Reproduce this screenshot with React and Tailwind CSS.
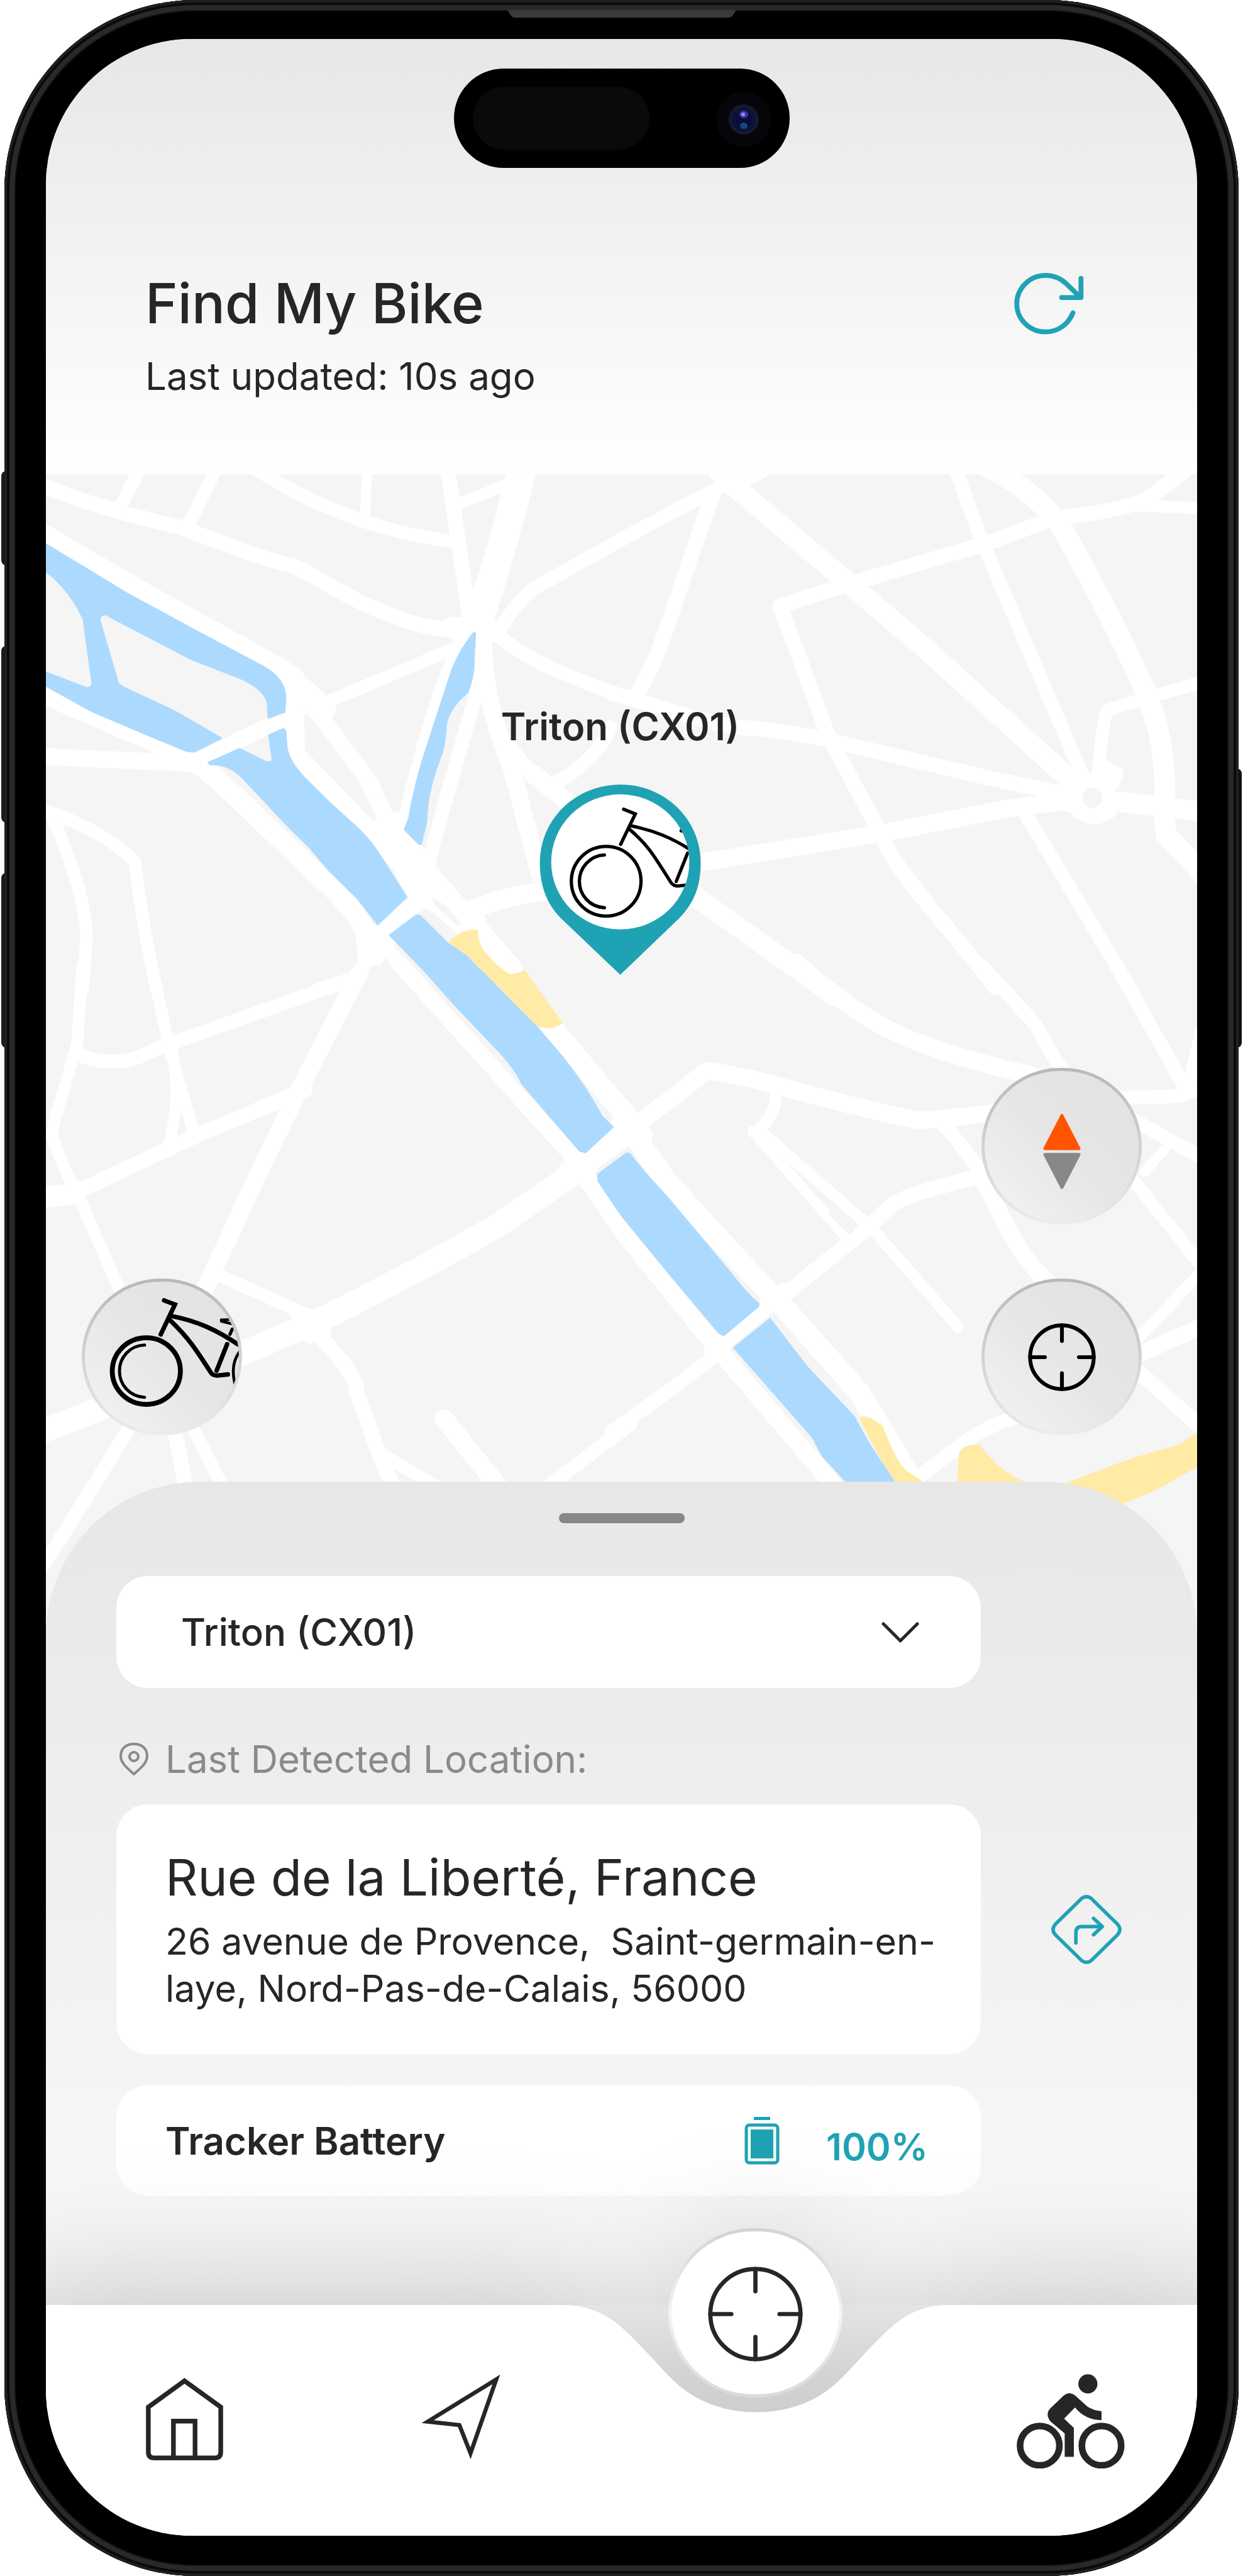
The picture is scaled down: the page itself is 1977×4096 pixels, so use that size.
import React from "react";

// The map is cut in four tiles. Each tile has its own 1568 x 1568 grid.
const tiles = [
  {
    id: "north-west",
    x: 0, y: 780, w: 1060, h: 900,
    roads: [
      [24, "M90 75C200 130 320 170 450 205C560 250 650 300 740 320C850 390 900 430 990 470C1060 500 1110 515 1180 510"],
      [21, "M350 40L305 140"],
      [21, "M542 40L475 200"],
      [21, "M640 30C720 90 820 150 920 190C1000 220 1080 240 1150 250"],
      [16, "M926 40L920 190"],
      [24, "M1130 40C1145 150 1160 280 1185 480"],
      [46, "M1317 30C1285 200 1245 350 1200 510"],
      [18, "M1150 140L1300 70"],
      [22, "M1590 228L1345 390C1310 420 1290 460 1260 510"],
      [22, "M1230 505C1290 560 1340 600 1400 630C1460 660 1520 690 1590 715"],
      [34, "M1140 505L1250 515"],
      [30, "M1170 540C1110 700 1060 900 1020 1120"],
      [22, "M1220 520L1215 640C1190 760 1130 980 1080 1210"],
      [28, "M1218 520C1220 700 1250 800 1290 920C1320 1050 1340 1150 1370 1270"],
      [20, "M800 738L1160 560"],
      [34, "M90 215L350 395L710 630L820 745"],
      [30, "M742 650L745 880L950 1130L1100 1320L1170 1395"],
      [27, "M790 740L930 960L990 1110"],
      [26, "M480 910L750 755"],
      [32, "M90 692L400 850L500 910C560 960 700 1130 830 1270C880 1330 920 1380 930 1440"],
      [27, "M90 887L490 908"],
      [20, "M90 1040C200 1080 280 1130 340 1200C350 1300 370 1450 395 1580"],
      [20, "M130 1060C180 1200 218 1330 218 1430L208 1580"],
      [22, "M960 1440L1080 1590"],
      [26, "M930 1440L1060 1315"],
      [30, "M1150 1365C1230 1320 1300 1295 1400 1285"],
      [36, "M1180 1370L1290 1520"],
      [22, "M1290 860C1320 920 1350 940 1385 975C1450 940 1520 870 1540 800"],
      [30, "M1345 940L1440 1030"],
    ],
    blocks: [
      "M940 1080L1010 1050L1090 1200L1170 1310L1230 1370L1160 1400L1020 1300Z",
      "M895 1380L960 1390L1000 1440L960 1508L935 1510L915 1568L780 1568L880 1530L903 1500Z",
    ],
    ground: ["M1094 1308L1130 1335L1166 1388L1150 1388L1094 1326Z"],
    water: [
      "M100 243L320 400L500 515L660 615Q725 655 722 720L720 757L675 776L673 730Q665 690 610 660L480 600L265 468Q250 470 255 490L300 670L315 682L440 750L562 833L490 876L470 874L400 840L230 755L115 680L100 672L100 628L215 680Q232 685 230 665L222 600L208 480Q200 460 185 430Q155 375 115 340L100 330Z",
      "M522 905L604 862L660 895Q685 910 685 895L676 823L715 803L722 810L725 860Q730 900 770 950L830 1020L900 1095Q940 1140 960 1180L1028 1305L953 1390L900 1310L830 1230L780 1160L720 1090L620 965Q580 910 530 914Z",
      "M1195 517L1201 520L1196 630Q1190 680 1180 700Q1130 750 1127 800Q1125 860 1110 900Q1078 1000 1078 1080L1064 1150L1056 1150L1018 1105L1030 1070Q1045 960 1080 840L1130 660Q1150 580 1195 517Z",
      "M980 1418L1050 1357L1060 1358L1130 1440L1180 1480L1232 1545L1085 1545Z",
    ],
    sand: ["M1132 1440Q1160 1400 1205 1402Q1205 1440 1225 1470Q1270 1530 1290 1535L1325 1523L1350 1568L1250 1568L1180 1480Z"],
  },
  {
    id: "north-east",
    x: 1060, y: 780, w: 1060, h: 900,
    roads: [
      [22, "M-25 258L250 85"],
      [26, "M270 85L350 40"],
      [26, "M235 35L275 85"],
      [33, "M275 75L570 370L760 560L1150 975"],
      [24, "M235 100C200 200 160 350 110 520C80 620 60 660 35 710"],
      [24, "M400 440L560 380C700 330 850 280 920 255C1000 225 1050 190 1120 175C1200 165 1280 150 1330 120L1420 40"],
      [24, "M400 440L520 820C580 960 640 1080 680 1180C740 1290 850 1430 945 1575"],
      [22, "M845 40L905 235L1165 950"],
      [33, "M920 25C1000 70 1060 130 1105 195C1180 350 1260 530 1325 700C1365 830 1375 900 1370 1080L1375 1120L1470 1240"],
      [19, "M1300 142L1470 150"],
      [20, "M1470 665L1330 712L1225 750Q1210 820 1203 940"],
      [24, "M-25 700C80 730 150 770 290 800C400 810 500 830 560 850C750 900 900 950 1130 1000"],
      [28, "M150 1212L660 1115L960 1045L1150 1015"],
      [32, "M1200 1015L1400 1042L1470 1052"],
      [22, "M1020 1060L1290 1590"],
      [32, "M170 1290L540 1600"],
    ],
    blocks: [
      "M1110 970L1170 930L1240 960L1250 1060Q1220 1090 1190 1090Q1150 1080 1135 1055L1090 1040Z",
      "M1210 890L1265 925Q1270 950 1250 985L1200 990Z",
      "M1065 1000L1160 985L1160 1040L1100 1020Z",
    ],
    ground: ["M1163 1010A25 31 0 1 1 1213 1010A25 31 0 1 1 1163 1010Z"],
    water: [],
    sand: [],
  },
  {
    id: "south-west",
    x: 0, y: 1660, w: 1060, h: 1000,
    roads: [
      [19, "M207 -20L195 180C170 290 140 370 130 430C150 500 180 560 200 600C240 700 280 790 315 880"],
      [22, "M195 215C270 250 340 235 390 202L900 10"],
      [19, "M383 -20L425 190L490 430"],
      [18, "M430 190C450 280 450 380 420 470"],
      [24, "M90 600C150 590 190 580 230 565L480 440L770 310"],
      [34, "M90 600L190 588"],
      [28, "M905 0L750 320L640 560L510 860"],
      [26, "M1005 -30L1450 495"],
      [38, "M1480 510L1260 670C1150 740 950 850 800 930L600 1020L90 1230"],
      [40, "M1440 530L1600 410"],
      [20, "M540 800L770 910"],
      [24, "M790 950C870 1040 900 1080 900 1120C930 1200 950 1280 992 1370"],
      [20, "M970 1290L1100 1370"],
      [30, "M1120 1190L1260 1375"],
      [22, "M1590 1205L1370 1380"],
      [22, "M340 1190L200 1430L110 1580"],
      [24, "M440 1220L472 1390"],
      [20, "M480 1200L570 1390"],
      [26, "M1475 530L1585 710"],
      [34, "M1390 140L1500 280L1620 430"],
    ],
    blocks: ["M740 885L797 898L850 880L830 975L780 990L730 960Q745 940 733 915Z"],
    ground: [],
    water: ["M1062 -15L1210 -15L1355 140L1420 220Q1480 300 1520 380L1549 410L1478 480L1462 476L1315 295Q1300 255 1240 190L1150 90Z"],
    sand: ["M1225 0L1280 0Q1290 5 1305 0L1330 0L1420 132Q1400 145 1385 146L1355 140Z"],
  },
  {
    id: "south-east",
    x: 1060, y: 1660, w: 1060, h: 1000,
    roads: [
      [28, "M440 -30C560 80 650 145 740 180C850 225 950 250 1030 270L1100 300"],
      [22, "M910 -20L1040 130C1070 180 1090 230 1130 280"],
      [22, "M1250 -20L1420 300"],
      [20, "M1465 150L1430 300"],
      [22, "M1240 332L1400 328Q1440 320 1470 300"],
      [28, "M30 410L215 260C330 270 500 340 750 392C820 390 900 375 960 370"],
      [19, "M388 310C395 360 370 400 335 425"],
      [16, "M330 420L575 715"],
      [18, "M350 420L620 670"],
      [24, "M890 545C800 570 720 590 680 620L620 680L410 860"],
      [18, "M640 690L850 945"],
      [22, "M810 400C860 460 910 530 930 580"],
      [27, "M910 550C970 660 990 740 1080 830"],
      [34, "M0 400L30 430L110 550L290 760L400 880L500 1000L600 1120L680 1260L740 1370"],
      [28, "M-90 545L17 710L240 1000L545 1380"],
      [22, "M250 1010L140 1100L-25 1225"],
      [28, "M230 1010L410 850"],
      [22, "M750 1345L870 1250C920 1210 980 1190 1040 1170"],
      [22, "M1290 390L1470 495"],
      [20, "M1290 550L1470 790"],
      [16, "M1320 530L1370 470"],
      [18, "M1470 790L1290 990"],
      [26, "M1300 1020L1470 940"],
      [24, "M1300 1060L1470 1220"],
    ],
    blocks: [],
    ground: ["M524 635L540 640L588 688L575 698L524 645Z"],
    water: [
      "M-61 535L0 487L12 478L22 480L60 530L120 600L270 790Q330 870 348 880L348 890L258 970L245 962L140 830L0 650L-61 555Z",
      "M281 1000L375 920L470 1050L590 1185Q640 1290 700 1365L570 1365L505 1290L480 1240Z",
    ],
    sand: [
      "M600 1187Q620 1175 660 1210Q690 1300 720 1330Q745 1345 770 1365L695 1365Q650 1300 600 1187Z",
      "M846 1365L852 1280Q865 1256 905 1260Q950 1330 1025 1362L1025 1365Z",
      "M1100 1370L1250 1310Q1330 1280 1400 1262Q1430 1245 1460 1220L1460 1315L1350 1380L1265 1418L1100 1440Z",
    ],
  },
];

function Tile({ tile, children }) {
  return (
    <svg
      x={tile.x}
      y={tile.y}
      width={tile.w}
      height={tile.h}
      viewBox="0 0 1568 1568"
      preserveAspectRatio="none"
      className="overflow-visible"
    >
      {children}
    </svg>
  );
}

function CityMap() {
  return (
    <svg
      viewBox="78 808 1964 1980"
      preserveAspectRatio="xMidYMin slice"
      className="absolute inset-0 h-full w-full"
      aria-hidden="true"
    >
      {tiles.map((t) => (
        <Tile key={t.id} tile={t}>
          {t.roads.map(([width, d]) => (
            <path
              key={d}
              d={d}
              fill="none"
              stroke="#fff"
              strokeWidth={width}
              strokeLinejoin="round"
              strokeLinecap="round"
              vectorEffect="non-scaling-stroke"
            />
          ))}
          {t.blocks.map((d) => <path key={d} d={d} fill="#fff" />)}
          {t.ground.map((d) => <path key={d} d={d} fill="#f5f5f5" />)}
        </Tile>
      ))}
      {tiles.map((t) => (
        <Tile key={t.id} tile={t}>
          {t.water.map((d) => <path key={d} d={d} fill="#acdaff" />)}
          {t.sand.map((d) => <path key={d} d={d} fill="#ffeba6" />)}
        </Tile>
      ))}
    </svg>
  );
}

function RefreshIcon() {
  return (
    <svg viewBox="80 70 380 340" className="h-[106px] w-[118px]" fill="none" stroke="#20a2b5" strokeWidth="25" strokeLinecap="round" strokeLinejoin="round">
      <path d="M391 286C368 345 315 384 250 384C170 384 103 320 103 240C103 160 170 95 250 95C290 95 325 108 355 136L425 203" />
      <path d="M432 110V208H333" />
    </svg>
  );
}

function BikePin() {
  return (
    <svg viewBox="55 50 835 980" className="h-[305px] w-[260px]" aria-hidden="true">
      <clipPath id="pin-face">
        <ellipse cx="471" cy="450" rx="353" ry="345" />
      </clipPath>
      <path fill="#20a2b5" d="M471 1027L165 735C95 665 60 570 60 455C60 230 245 55 471 55C697 55 882 230 882 455C882 570 850 660 770 740Z" />
      <ellipse cx="471" cy="450" rx="353" ry="345" fill="#fff" />
      <g clipPath="url(#pin-face)" fill="none" stroke="#000" strokeWidth="17" strokeLinecap="round">
        <circle cx="399" cy="549" r="178" />
        <path d="M390 414C315 418 262 480 262 549C262 620 315 680 390 684" />
        <path d="M473 360L548 205L488 181" />
        <path d="M522 265C640 288 730 325 830 388" />
        <path d="M520 285C620 370 650 430 730 555Q742 573 765 573L815 568" />
        <path d="M757 550L815 405M782 291L810 293" />
      </g>
    </svg>
  );
}

function BikeIcon() {
  return (
    <svg viewBox="42 76 790 772" className="h-full w-full" fill="none" stroke="#000" strokeWidth="23" strokeLinecap="round">
      <ellipse cx="357" cy="535" rx="175" ry="171" strokeWidth="25" />
      <path strokeWidth="16" d="M348 401C270 405 219 465 219 535C219 605 270 665 348 670" />
      <path d="M431 347L504 193L448 172" />
      <path d="M485 252C620 278 720 325 828 398" />
      <path d="M480 275C570 360 610 420 690 545Q700 558 720 558L776 552" />
      <path d="M718 533L772 397" />
      <path strokeWidth="17" d="M787 346L798 320" />
      <path strokeWidth="14" d="M742 272L790 270M742 279L795 292" />
      <path strokeWidth="15" d="M840 430C800 480 797 540 812 600" />
    </svg>
  );
}

function CompassIcon() {
  return (
    <svg viewBox="0 0 64 128" className="mt-4 h-[120px] w-[60px]">
      <path fill="#ff5500" stroke="#ff5500" strokeWidth="5" strokeLinejoin="round" d="M32 3L61 59H3Z" />
      <path fill="#888" stroke="#888" strokeWidth="5" strokeLinejoin="round" d="M32 125L61 69H3Z" />
    </svg>
  );
}

function TargetIcon({ className, strokeWidth }) {
  return (
    <svg viewBox="0 0 160 160" className={className} fill="none" stroke="currentColor" strokeWidth={strokeWidth} strokeLinecap="round">
      <circle cx="80" cy="80" r="75" />
      <path d="M80 5V42M80 155V118M5 80H40M155 80H120" />
    </svg>
  );
}

function RoundButton({ label, children }) {
  return (
    <button
      type="button"
      aria-label={label}
      className="h-[249px] w-[255px] rounded-full bg-linear-to-b from-[#b8b8b8] to-[#ececec] p-[5px]"
    >
      <span className="flex h-full w-full items-center justify-center overflow-hidden rounded-full bg-linear-to-tr from-[#f4f4f4] via-[#e6e6e6] to-[#e2e2e2]">
        {children}
      </span>
    </button>
  );
}

function Header() {
  return (
    <header className="bg-linear-to-b from-[#e7e7e7] to-white pt-[47px] pb-[120px]">
      <div className="mx-auto flex h-[158px] w-[534px] items-center justify-between rounded-full bg-black pr-7 pl-[30px]">
        <div className="h-[100px] w-[281px] rounded-full bg-[#0a0a0a]" />
        <svg viewBox="0 0 90 90" className="mt-1 h-[90px] w-[90px]">
          <circle cx="45" cy="45" r="44" fill="#070509" />
          <circle cx="45" cy="45" r="24" fill="#141a30" />
          <circle cx="45" cy="45" r="19" fill="#0c1238" />
          <circle cx="45" cy="45" r="13" fill="#0d0a3c" />
          <ellipse cx="45" cy="37" rx="7" ry="6" fill="#3a36a8" />
          <circle cx="44" cy="37" r="3" fill="#8c93e8" />
          <ellipse cx="45" cy="55" rx="6" ry="5" fill="#124a80" />
        </svg>
      </div>
      <div className="mt-[163px] flex items-start justify-between pr-44 pl-[158px]">
        <div>
          <h1 className="text-[88px] leading-[104px] font-medium">Find My Bike</h1>
          <p className="mt-7 text-[60px] leading-[72px]">Last updated: 10s ago</p>
        </div>
        <button type="button" aria-label="Refresh location">
          <RefreshIcon />
        </button>
      </div>
    </header>
  );
}

function MapView() {
  return (
    <section aria-label="Map" className="relative flex h-[1846px] flex-col justify-end bg-[#f5f5f5] pb-[318px]">
      <CityMap />
      <div className="absolute inset-x-0 top-[365px] flex flex-col items-center gap-[55px] pr-1">
        <p className="text-[60px] leading-[72px] font-semibold">Triton (CX01)</p>
        <BikePin />
      </div>
      <div className="relative flex items-end justify-between pr-[88px] pl-[57px]">
        <RoundButton label="Show bike">
          <BikeIcon />
        </RoundButton>
        <div className="flex flex-col gap-[86px]">
          <RoundButton label="Compass">
            <CompassIcon />
          </RoundButton>
          <RoundButton label="Centre on my location">
            <TargetIcon className="h-[108px] w-[108px] text-black" strokeWidth={9} />
          </RoundButton>
        </div>
      </div>
    </section>
  );
}

function DetailSheet() {
  return (
    <section className="relative -mt-[244px] rounded-t-[244px] bg-linear-to-b from-[#e7e7e7] to-[#fafafa] pt-[50px] pr-[120px] pb-[174px] pl-28">
      <div className="flex justify-center pl-2">
        <div className="h-4 w-[200px] rounded-full bg-[#878787]" />
      </div>
      <div className="mt-[84px] grid grid-cols-[minmax(0,1fr)_112px] gap-x-28">
        <div className="relative h-[178px] rounded-[50px] bg-white">
          <select
            aria-label="Bike"
            className="h-full w-full appearance-none rounded-[50px] bg-transparent pl-[103px] text-[60px] font-medium"
          >
            <option>Triton (CX01)</option>
          </select>
          <svg viewBox="0 0 60 34" className="pointer-events-none absolute top-[73px] right-[98px] h-[34px] w-[60px]" fill="none" stroke="#262626" strokeWidth="5" strokeLinecap="round" strokeLinejoin="round">
            <path d="M3 3L30 30L57 3" />
          </svg>
        </div>

        <div className="col-start-1 mt-[77px] flex items-center gap-[26px] pl-1 text-[#8a8a8a]">
          <svg viewBox="0 0 48 54" className="h-[54px] w-12" fill="none" stroke="currentColor" strokeWidth="4" strokeLinejoin="round">
            <path d="M24 51C16 43 3 35 3 22C3 10 12 3 24 3C36 3 45 10 45 22C45 35 32 43 24 51Z" />
            <circle cx="24" cy="23" r="7" />
          </svg>
          <h2 className="text-[60px] leading-[72px]">Last Detected Location:</h2>
        </div>

        <div className="col-start-1 mt-9 rounded-[50px] bg-white pt-[68px] pr-[70px] pb-[67px] pl-[78px]">
          <p className="text-[80px] leading-[96px]">Rue de la Liberté, France</p>
          <p className="mt-4 text-[59px] leading-[75px] whitespace-pre">
            {"26 avenue de Provence,  Saint-germain-en-\nlaye, Nord-Pas-de-Calais, 56000"}
          </p>
        </div>
        <button type="button" aria-label="Get directions" className="mt-9 self-center">
          <svg viewBox="0 0 120 118" className="h-[110px] w-28" fill="none" stroke="#20a2b5" strokeWidth="6" strokeLinecap="round" strokeLinejoin="round">
            <path d="M52 6Q60 0 68 6L113 50Q121 59 113 68L68 112Q60 118 52 112L7 68Q-1 59 7 50Z" />
            <path d="M42 82V64Q42 54 52 54H86M72 40L87 54L72 68" />
          </svg>
        </button>

        <div className="col-start-1 mt-[50px] flex h-[175px] items-center justify-between rounded-[50px] bg-white pr-[84px] pl-[78px]">
          <p className="text-[60px] leading-[72px] font-semibold">Tracker Battery</p>
          <div className="flex items-center gap-[74px]">
            <svg viewBox="0 0 56 76" className="h-[76px] w-14">
              <path fill="#20a2b5" d="M15 0H41V5H15Z" />
              <rect x="3" y="13" width="50" height="60" rx="5" fill="none" stroke="#20a2b5" strokeWidth="5" />
              <rect x="10" y="20" width="36" height="46" fill="#20a2b5" />
            </svg>
            <p className="mt-5 text-[59px] leading-[72px] font-semibold text-[#20a2b5]">100%</p>
          </div>
        </div>
      </div>
    </section>
  );
}

function TabBar() {
  return (
    <nav aria-label="Main" className="relative h-[367px]">
      <svg
        viewBox="0 0 1964 394"
        preserveAspectRatio="none"
        className="absolute inset-0 h-full w-full overflow-visible"
        aria-hidden="true"
      >
        <circle cx="1212" cy="20" r="160" className="fill-black/12 blur-[90px]" />
        <path
          className="fill-white drop-shadow-[0_0_120px_rgba(0,0,0,0.25)]"
          d="M-100 0H882C925 0 958 17 982 38C1020 72 1045 105 1077 135C1117 170 1165 183 1212 183C1259 183 1307 170 1347 135C1379 105 1404 72 1442 38C1466 17 1497 0 1540 0H2064V900H-100Z"
        />
      </svg>
      <ul className="relative grid grid-cols-[438fr_393fr_555fr_287fr] items-start pt-[110px] pl-[159px] text-[#262626]">
        <li>
          <a href="#home" aria-label="Home" className="block pt-[6px]">
            <svg viewBox="0 0 132 141" className="h-[131px] w-[123px]" fill="none" stroke="currentColor" strokeWidth="8">
              <path d="M66 5L128 50V127Q128 137 118 137H14Q4 137 4 127V50Z" />
              <path d="M47 137V74H84V137" />
            </svg>
          </a>
        </li>
        <li>
          <a href="#navigate" aria-label="Navigate" className="block">
            <svg viewBox="0 0 134 147" className="h-[137px] w-[125px] overflow-visible" fill="none" stroke="currentColor" strokeWidth="7" strokeMiterlimit="10">
              <path d="M128 9L84 135L65 87L11 81Z" />
            </svg>
          </a>
        </li>
        <li>
          <a
            href="#find"
            aria-label="Find my bike"
            aria-current="page"
            className="-mt-[232px] block h-[269px] w-[277px] rounded-full bg-linear-to-b from-[#d2d2d2] via-[#f4f4f4] to-[#dadada] p-[5px]"
          >
            <span className="flex h-full w-full items-center justify-center rounded-full bg-white">
              <TargetIcon className="mt-1 h-[153px] w-[153px]" strokeWidth={7} />
            </span>
          </a>
        </li>
        <li>
          <a href="#rides" aria-label="Rides" className="block">
            <svg viewBox="103 86 554 484" className="h-[150px] w-[172px]" fill="currentColor">
              <circle cx="468" cy="136" r="49" />
              <circle cx="221" cy="453" r="101" fill="none" stroke="currentColor" strokeWidth="34" />
              <circle cx="538" cy="453" r="101" fill="none" stroke="currentColor" strokeWidth="34" />
              <path d="M345 195Q373 172 402 195L465 252Q497 273 538 276V322Q455 322 402 257L346 314L396 362V510H349V390L275 328Q248 290 275 262Z" />
            </svg>
          </a>
        </li>
      </ul>
    </nav>
  );
}

export default function App() {
  return (
    <div className="min-h-screen bg-white font-['Inter',sans-serif] text-[#262626]">
      <div className="relative px-[7px]">
        <div className="absolute top-[749px] left-[2px] h-[150px] w-3 rounded-l-lg bg-[#1c1c1c]" />
        <div className="absolute top-[1027px] left-[2px] h-[281px] w-3 rounded-l-lg bg-[#1c1c1c]" />
        <div className="absolute top-[1388px] left-[2px] h-[278px] w-3 rounded-l-lg bg-[#1c1c1c]" />
        <div className="absolute top-[1222px] right-[2px] h-[444px] w-3 rounded-r-lg bg-[#111]" />
        <div className="relative rounded-[304px] bg-black px-[66px] pt-[62px] pb-16 shadow-[inset_0_0_0_4px_#202020,inset_0_0_0_8px_#0a0a0a,inset_0_0_0_16px_#292929,inset_0_0_0_18px_#101010]">
          <svg viewBox="0 0 364 12" className="absolute top-4 left-1/2 h-3 w-[364px] -translate-x-1/2" aria-hidden="true">
            <path fill="#3a3a3a" d="M0 0H364L358 9Q356 12 352 12H12Q8 12 6 9Z" />
          </svg>
          <main className="overflow-hidden rounded-[232px] bg-white">
            <Header />
            <MapView />
            <DetailSheet />
            <TabBar />
          </main>
        </div>
      </div>
    </div>
  );
}
